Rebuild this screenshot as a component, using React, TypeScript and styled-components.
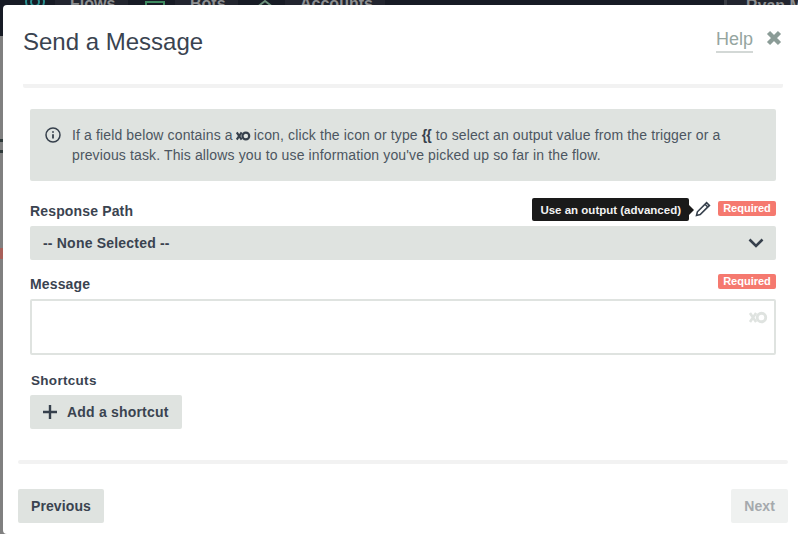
import React from "react";
import styled, { createGlobalStyle } from "styled-components";

const Global = createGlobalStyle`
  html, body { margin: 0; padding: 0; background: #808080; }
  body { width: 798px; height: 534px; overflow: hidden; font-family: "Liberation Sans", Arial, sans-serif; }
  * { box-sizing: border-box; }
`;

const Page = styled.div`
  position: relative;
  width: 798px;
  height: 534px;
  overflow: hidden;
  background: #808080;
`;

const Nav = styled.div`
  display: flex;
  align-items: flex-start;
  height: 43px;
  margin-top: -7px;
  padding-left: 25px;
  background: #171b25;
`;

const NavIcon = styled.svg`
  flex: none;
  width: 20px;
  height: 12px;
  margin: 7px 10px 0 0;
`;

const NavCell = styled.div<{ $w: number }>`
  width: ${(p) => p.$w}px;
  height: 100%;
  margin-right: 17px;
  padding: 3px 0 0 15px;
  background: #22252f;
  font-size: 16px;
  font-weight: 700;
  line-height: 16px;
  color: #8d8f91;
`;

const NavUser = styled.div`
  margin-left: auto;
  width: 74px;
  height: 100%;
  padding: 5px 0 0 19px;
  background: #22252f;
  border-left: 3px solid #3a3d44;
  font-size: 16px;
  font-weight: 700;
  line-height: 16px;
  color: #8d8f91;
  white-space: nowrap;
  overflow: hidden;
`;

const Rail = styled.div`
  width: 3px;
`;

const RailMark = styled.div<{ $mt: number; $h: number; $c: string }>`
  margin-top: ${(p) => p.$mt}px;
  height: ${(p) => p.$h}px;
  background: ${(p) => p.$c};
`;

const Modal = styled.div`
  position: absolute;
  left: 3px;
  top: 5px;
  width: 800px;
  height: 529px;
  background: #fff;
  border-radius: 4px 0 0 4px;
  padding: 0 10px 0 15px;
`;

const Header = styled.header`
  display: flex;
  align-items: flex-start;
  justify-content: space-between;
  height: 83px;
  margin: 0 10px 0 5px;
  border-bottom: 4px solid #f2f2f2;
  border-radius: 2px;
  padding-top: 22px;
`;

const Title = styled.h1`
  margin: 0;
  font-size: 24px;
  font-weight: 400;
  line-height: 30px;
  color: #3a4350;
`;

const HeaderActions = styled.div`
  display: flex;
  align-items: flex-start;
  gap: 13px;
  margin-right: 1px;
`;

const Help = styled.span`
  font-size: 18px;
  line-height: 24px;
  color: #95a5a0;
  border-bottom: 2px solid #d3d8d6;
`;

const CloseIcon = styled.svg`
  margin-top: 3px;
`;

const Body = styled.div`
  padding: 21px 17px 0 12px;
`;

const Notice = styled.div`
  display: flex;
  gap: 11px;
  height: 72px;
  background: #dfe3e0;
  border-radius: 2px;
  padding: 16px 15px;
  font-size: 14px;
  line-height: 20px;
  color: #4c5661;
`;

const InfoIcon = styled.svg`
  flex: none;
  margin-top: 2px;
`;

const NoticeText = styled.p`
  margin: 0;
  flex: 1;
  letter-spacing: 0.13px;
`;

const InlineLink = styled.span`
  display: inline-block;
  line-height: 0;
  color: #36404c;
  vertical-align: -1px;
  margin: 0 -1px;
  svg { display: block; }
`;

const Braces = styled.b`
  color: #36404c;
  letter-spacing: -1px;
  margin-right: 1px;
`;

const FieldHead = styled.div<{ $mt: number }>`
  display: flex;
  align-items: center;
  justify-content: space-between;
  margin-top: ${(p) => p.$mt}px;
  height: 18px;
`;

const Label = styled.label`
  font-size: 14px;
  font-weight: 700;
  line-height: 18px;
  letter-spacing: 0.15px;
  color: #3a4350;
`;

const HeadRight = styled.div`
  display: flex;
  align-items: center;
  position: relative;
  margin-top: -6px;
`;

const Tip = styled.div`
  position: absolute;
  right: 87px;
  top: -1px;
  height: 23px;
  padding: 0 8px;
  display: flex;
  align-items: center;
  white-space: nowrap;
  font-size: 11.5px;
  font-weight: 700;
  color: #f2f2f2;
  background: #1a1a1a;
  border-radius: 2px;
  &::after {
    content: "";
    position: absolute;
    right: -5px;
    top: 7px;
    border-left: 5px solid #1a1a1a;
    border-top: 5px solid transparent;
    border-bottom: 5px solid transparent;
  }
`;

const PencilWrap = styled.span`
  display: flex;
  margin: 2px 7px 0 0;
`;

const Required = styled.span`
  display: inline-block;
  height: 15px;
  width: 58px;
  text-align: center;
  font-size: 11px;
  font-weight: 700;
  line-height: 14px;
  color: #fff;
  background: #f5796f;
  border-radius: 2px;
`;

const Select = styled.div`
  display: flex;
  align-items: center;
  justify-content: space-between;
  margin-top: 6px;
  height: 34px;
  background: #dfe3e0;
  border-radius: 2px;
  padding: 0 12px 0 13px;
  font-size: 14px;
  font-weight: 700;
  letter-spacing: 0.2px;
  color: #3a4350;
`;

const MessageBox = styled.div`
  display: flex;
  justify-content: flex-end;
  margin-top: 6px;
  height: 56px;
  border: 2px solid #dfe3e0;
  border-radius: 2px;
  padding: 9px 6px;
  color: #dfe3e0;
`;

const ShortcutLabel = styled(Label)`
  display: block;
  margin: 17px 0 0 1px;
  font-size: 13.5px;
  letter-spacing: 0.3px;
`;

const Button = styled.button<{ $disabled?: boolean }>`
  display: inline-flex;
  align-items: center;
  height: 34px;
  border: 0;
  border-radius: 2px;
  font-family: inherit;
  font-size: 14px;
  font-weight: 700;
  letter-spacing: 0.1px;
  padding: 0 13px;
  background: ${(p) => (p.$disabled ? "#eff1f0" : "#dfe3e0")};
  color: ${(p) => (p.$disabled ? "#a5a9ad" : "#3a4350")};
`;

const AddButton = styled(Button)`
  margin-top: 5px;
  gap: 10px;
  letter-spacing: 0.2px;
`;

const Divider = styled.div`
  height: 4px;
  margin: 31px 0 0 0;
  background: #f2f2f2;
  border-radius: 2px;
`;

const FootWrap = styled.div`
  width: 770px;
`;

const Footer = styled.footer`
  display: flex;
  justify-content: space-between;
  margin-top: 25px;
`;

const LinkGlyph = ({ w, h }: { w: number; h: number }) => (
  <svg width={w} height={h} viewBox="0 0 16 10" fill="none">
    <path d="M0.8 1.2 L6 8.8 M6 1.2 L0.8 8.8" stroke="currentColor" strokeWidth="2.2" />
    <circle cx="10.5" cy="5" r="3.6" stroke="currentColor" strokeWidth="2.4" />
  </svg>
);

export default function App() {
  return (
    <Page>
      <Global />
      <Nav>
        <NavIcon viewBox="0 0 20 12" fill="none" stroke="#2a8f8f" strokeWidth="2">
          <circle cx="10" cy="2" r="9" />
          <circle cx="10" cy="2" r="4" />
        </NavIcon>
        <NavCell $w={73}>Flows</NavCell>
        <NavIcon viewBox="0 0 20 12" fill="none" stroke="#3f8a60" strokeWidth="2">
          <path d="M1 12V2H19V12" />
        </NavIcon>
        <NavCell $w={63}>Bots</NavCell>
        <NavIcon viewBox="0 0 20 12" fill="none" stroke="#6b8f7a" strokeWidth="2">
          <path d="M1 8L10 1L19 8" />
        </NavIcon>
        <NavCell $w={100}>Accounts</NavCell>
        <NavUser>Ryan M</NavUser>
      </Nav>
      <Rail>
        <RailMark $mt={103} $h={3} $c="#2f3a3a" />
        <RailMark $mt={8} $h={3} $c="#2f3a3a" />
        <RailMark $mt={95} $h={11} $c="#a8605a" />
      </Rail>
      <Modal>
        <Header>
          <Title>Send a Message</Title>
          <HeaderActions>
            <Help>Help</Help>
            <CloseIcon width="16" height="16" viewBox="0 0 16 16">
              <path d="M2.5 2.5 L13.5 13.5 M13.5 2.5 L2.5 13.5" stroke="#8b9c97" strokeWidth="4.4" />
            </CloseIcon>
          </HeaderActions>
        </Header>
        <Body>
          <Notice>
            <InfoIcon width="16" height="16" viewBox="0 0 16 16" fill="none" stroke="#36404c">
              <circle cx="8" cy="8" r="7" strokeWidth="1.5" />
              <path d="M8 7.2V11.6" strokeWidth="1.8" />
              <path d="M8 4.2V5.8" strokeWidth="1.8" />
            </InfoIcon>
            <NoticeText>
              If a field below contains a{" "}
              <InlineLink><LinkGlyph w={15} h={10} /></InlineLink>{" "}
              icon, click the icon or type <Braces>{"{{"}</Braces> to select an output value from the trigger or a previous task. This allows you to use information you've picked up so far in the flow.
            </NoticeText>
          </Notice>
          <FieldHead $mt={21}>
            <Label>Response Path</Label>
            <HeadRight>
              <Tip>Use an output (advanced)</Tip>
              <PencilWrap>
                <svg width="16" height="16" viewBox="0 0 16 16" fill="none" stroke="#36404c" strokeWidth="1.6">
                  <path d="M1.5 14.5 L2.4 10.8 L11.6 1.6 L14.4 4.4 L5.2 13.6 Z" />
                  <path d="M10 3.2 L12.8 6" />
                </svg>
              </PencilWrap>
              <Required>Required</Required>
            </HeadRight>
          </FieldHead>
          <Select>
            -- None Selected --
            <svg width="16" height="10" viewBox="0 0 16 10" fill="none" stroke="#36404c" strokeWidth="2.6">
              <path d="M1.5 1.5 L8 8 L14.5 1.5" />
            </svg>
          </Select>
          <FieldHead $mt={15}>
            <Label>Message</Label>
            <HeadRight><Required>Required</Required></HeadRight>
          </FieldHead>
          <MessageBox>
            <div><LinkGlyph w={19} h={13} /></div>
          </MessageBox>
          <ShortcutLabel>Shortcuts</ShortcutLabel>
          <AddButton>
            <svg width="14" height="14" viewBox="0 0 14 14" stroke="#36404c" strokeWidth="2.4">
              <path d="M7 0V14M0 7H14" />
            </svg>
            Add a shortcut
          </AddButton>
        </Body>
        <FootWrap>
          <Divider />
          <Footer>
            <Button>Previous</Button>
            <Button $disabled>Next</Button>
          </Footer>
        </FootWrap>
      </Modal>
    </Page>
  );
}
